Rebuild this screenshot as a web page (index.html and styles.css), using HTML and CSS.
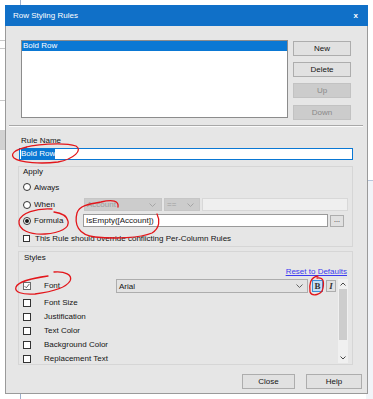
FILE: index.html
```html
<!DOCTYPE html>
<html>
<head>
<meta charset="utf-8">
<link rel="stylesheet" href="styles.css">
</head>
<body>
<div class="backdrop">
  <div class="bd-vline"></div>
  <div class="bd-hline l1"></div>
  <div class="bd-hline l2"></div>
  <div class="bd-hline l3"></div>
  <div class="bd-block"></div>
  <div class="bd-right"></div>
</div>

<div class="dialog">
  <div class="titlebar">
    <span class="title">Row Styling Rules</span>
    <span class="close">x</span>
  </div>
  <div class="body">
    <div class="top">
      <div class="listbox">
        <div class="item selected">Bold Row</div>
      </div>
      <div class="side-buttons">
        <div class="btn">New</div>
        <div class="btn">Delete</div>
        <div class="btn disabled">Up</div>
        <div class="btn disabled down">Down</div>
      </div>
    </div>
    <div class="separator"></div>
    <div class="label name-label">Rule Name</div>
    <div class="textbox name-box"><span class="sel">Bold Row</span></div>

    <div class="group apply">
      <div class="group-label">Apply</div>
      <div class="row always">
        <div class="opt"><span class="radio"></span><span>Always</span></div>
      </div>
      <div class="row when">
        <div class="opt"><span class="radio"></span><span>When</span></div>
        <div class="combo disabled c-account"><span>Account</span><svg class="chev" width="7" height="4" viewBox="0 0 7 4"><path d="M0.5 0.5 L3.5 3.5 L6.5 0.5" fill="none" stroke="#a0a0a0" stroke-width="0.9"/></svg></div>
        <div class="combo disabled c-op"><span>==</span><svg class="chev" width="7" height="4" viewBox="0 0 7 4"><path d="M0.5 0.5 L3.5 3.5 L6.5 0.5" fill="none" stroke="#a0a0a0" stroke-width="0.9"/></svg></div>
        <div class="textbox disabled c-value"></div>
      </div>
      <div class="row formula">
        <div class="opt"><span class="radio checked"></span><span>Formula</span></div>
        <div class="textbox f-box">IsEmpty([Account])</div>
        <div class="btn dots">...</div>
      </div>
      <div class="row override">
        <span class="check small"></span><span>This Rule should override conflicting Per-Column Rules</span>
      </div>
    </div>

    <div class="group styles">
      <div class="group-label">Styles</div>
      <div class="link-row"><span class="link">Reset to Defaults</span></div>
      <div class="style-list">
        <div class="items">
          <div class="srow font-row">
            <span class="check checked"><svg width="6" height="6" viewBox="0 0 6 6"><path d="M0.6 3.1 L2.3 4.8 L5.4 0.9" fill="none" stroke="#555" stroke-width="0.9"/></svg></span>
            <span class="slabel">Font</span>
            <div class="combo font-combo"><span>Arial</span><svg class="chev" width="7" height="4" viewBox="0 0 7 4"><path d="M0.5 0.5 L3.5 3.5 L6.5 0.5" fill="none" stroke="#555" stroke-width="0.9"/></svg></div>
            <div class="fbtn bold active">B</div>
            <div class="fbtn italic">I</div>
          </div>
          <div class="srow"><span class="check"></span><span class="slabel">Font Size</span></div>
          <div class="srow"><span class="check"></span><span class="slabel">Justification</span></div>
          <div class="srow"><span class="check"></span><span class="slabel">Text Color</span></div>
          <div class="srow"><span class="check"></span><span class="slabel">Background Color</span></div>
          <div class="srow"><span class="check"></span><span class="slabel">Replacement Text</span></div>
        </div>
        <div class="scrollbar">
          <div class="arrow"><svg width="6" height="4" viewBox="0 0 6 4"><path d="M0.5 3.5 L3 1 L5.5 3.5" fill="none" stroke="#333" stroke-width="0.9"/></svg></div>
          <div class="thumb"></div>
          <div class="track"></div>
          <div class="arrow"><svg width="6" height="4" viewBox="0 0 6 4"><path d="M0.5 0.5 L3 3 L5.5 0.5" fill="none" stroke="#333" stroke-width="0.9"/></svg></div>
        </div>
      </div>
    </div>

    <div class="footer">
      <div class="btn fbig close-btn">Close</div>
      <div class="btn fbig help-btn">Help</div>
    </div>
  </div>
</div>

<svg class="annotations" width="373" height="399" viewBox="0 0 373 399">
  <g fill="none" stroke="#e3161b" stroke-width="1.3" stroke-linecap="round" stroke-linejoin="round">
    <path d="M20 149 C32 144 64 142 76 146 C83 150 74 159 58 162 C42 164 20 163 14 158 C10 154 14 150 27 147"/>
    <path d="M52 209 C36 208 21 213 19 221 C18 230 30 235 45 234 C60 233 70 228 68 221 C67 216 61 213 54 212"/>
    <path d="M118 207 C119 201 113 199 101 202 C88 204 79 206 77 213 C74 224 78 235 95 237 C115 239 140 238 152 233 C160 228 160 220 157 214"/>
    <path d="M54 272 C65 271 73 275 70 281 C66 288 50 292 35 294 C22 295 14 292 16 287 C18 282 33 278 48 276"/>
    <path d="M318 276 C310 277 309 285 310 292 C312 297 322 295 323 288 C324 282 324 277 317 278"/>
  </g>
</svg>
</body>
</html>
```

FILE: styles.css
```css
html, body {
  margin: 0;
  padding: 0;
}
body {
  width: 373px;
  height: 399px;
  overflow: hidden;
  background: #ffffff;
  position: relative;
  font-family: "Liberation Sans", Arial, sans-serif;
  font-size: 8px;
  color: #141414;
}

/* background application behind the dialog */
.backdrop {
  position: absolute;
  left: 0;
  top: 0;
  width: 373px;
  height: 399px;
  z-index: 0;
}
.bd-vline {
  position: absolute;
  left: 20px;
  top: 0;
  width: 1px;
  height: 399px;
  background: #9fb0cc;
}
.bd-hline {
  position: absolute;
  left: 0;
  width: 6px;
  height: 1px;
  background: #c8c8c8;
}
.bd-hline.l1 { top: 40px; }
.bd-hline.l2 { top: 48px; }
.bd-hline.l3 { top: 100px; }
.bd-block {
  position: absolute;
  left: 0;
  top: 130px;
  width: 6px;
  height: 20px;
  background: #d2d2d2;
}
.bd-right {
  position: absolute;
  left: 366px;
  top: 180px;
  width: 7px;
  height: 219px;
  background: #f2f4f8;
  border-top: 1px solid #b7c6dc;
}

/* dialog */
.dialog {
  position: relative;
  z-index: 1;
  margin: 5px 0 0 5px;
  width: 363px;
}
.titlebar {
  height: 21px;
  background: #1070c8;
  color: #ffffff;
  display: flex;
  align-items: center;
  justify-content: space-between;
  padding: 0 10px 0 8px;
  box-sizing: border-box;
}
.close {
  font-weight: bold;
  font-size: 8px;
}
.body {
  height: 368px;
  box-sizing: border-box;
  border: 1px solid #9a9a9a;
  border-top: none;
  background: #e6e6e6;
  padding: 14px 14px 4px 12px;
}

.top {
  display: flex;
  gap: 5px;
  height: 78px;
  margin: 0 2px 0 3px;
}
.listbox {
  width: 267px;
  height: 78px;
  box-sizing: border-box;
  border: 1px solid #8c8c8c;
  background: #ffffff;
}
.item {
  height: 10px;
  line-height: 10px;
  padding-left: 1px;
}
.item.selected {
  background: #0a78d4;
  color: #ffffff;
}
.side-buttons {
  width: 58px;
  display: flex;
  flex-direction: column;
  gap: 6px;
  padding-top: 1px;
}
.side-buttons .down {
  margin-top: 1px;
}
.btn {
  height: 15px;
  box-sizing: border-box;
  border: 1px solid #adadad;
  background: #e1e1e1;
  text-align: center;
  line-height: 13px;
  color: #141414;
}
.btn.disabled {
  background: #cccccc;
  border-color: #c2c2c2;
  color: #8a8a8a;
}

.separator {
  margin: 7px -10px 0 -9px;
  height: 2px;
  box-sizing: border-box;
  border-top: 1px solid #a8a8a8;
  border-bottom: 1px solid #fbfbfb;
}
.label {
  height: 10px;
  line-height: 10px;
}
.name-label {
  margin: 9px 0 0 3px;
}
.textbox {
  box-sizing: border-box;
  border: 1px solid #9a9a9a;
  background: #ffffff;
  line-height: 10px;
}
.name-box {
  margin: 2px 0 0 1px;
  height: 12px;
  border-color: #0a78d4;
  padding-left: 1px;
}
.sel {
  display: inline-block;
  background: #0a78d4;
  color: #ffffff;
  height: 10px;
}

/* group boxes */
.group {
  box-sizing: border-box;
  border: 1px solid #d6d6d6;
}
.group-label {
  height: 10px;
  line-height: 10px;
}
.apply {
  margin-top: 6px;
  height: 81px;
  padding: 0 3px 0 4px;
}
.row {
  display: flex;
  align-items: center;
}
.always { height: 12px; margin-top: 4px; }
.when { height: 13px; margin-top: 5px; }
.formula { height: 13px; margin-top: 3px; }
.override { height: 10px; margin-top: 6px; }

.opt {
  width: 61px;
  display: flex;
  align-items: center;
  height: 100%;
}
.radio {
  width: 8px;
  height: 8px;
  box-sizing: border-box;
  border: 1px solid #333333;
  border-radius: 50%;
  background: #ffffff;
  margin-right: 3px;
  display: flex;
  align-items: center;
  justify-content: center;
}
.radio.checked::after {
  content: "";
  width: 4px;
  height: 4px;
  border-radius: 50%;
  background: #1a1a1a;
}
.combo {
  height: 13px;
  box-sizing: border-box;
  display: flex;
  align-items: center;
  justify-content: space-between;
  padding: 0 5px 0 2px;
  border: 1px solid #b4b4b4;
}
.combo.disabled {
  background: #cccccc;
  border-color: #c6c6c6;
  color: #9c9c9c;
}
.c-account { width: 78px; }
.c-op { width: 36px; margin-left: 2px; }
.c-value {
  width: 146px;
  height: 13px;
  margin-left: 2px;
}
.textbox.disabled {
  background: #efefef;
  border-color: #d8d8d8;
}
.f-box {
  width: 245px;
  height: 13px;
  margin-left: -1px;
  padding-left: 2px;
  line-height: 11px;
}
.dots {
  width: 14px;
  height: 12px;
  margin: 1px 0 0 2px;
  line-height: 8px;
  align-self: flex-start;
  font-size: 7px;
}
.check {
  width: 8px;
  height: 8px;
  box-sizing: border-box;
  border: 1px solid #333333;
  background: #ffffff;
  display: flex;
  align-items: center;
  justify-content: center;
}
.check.small {
  width: 7px;
  height: 7px;
  margin-right: 5px;
}
.check.checked {
  border-color: #6a6a6a;
}

.styles {
  margin-top: 4px;
  height: 114px;
  padding: 0 4px;
}
.styles .group-label {
  margin-top: 1px;
  margin-left: 1px;
}
.link-row {
  margin-top: 4px;
  height: 10px;
  line-height: 10px;
  text-align: right;
  padding-right: 1px;
}
.link {
  color: #3b3bf0;
  text-decoration: underline;
}
.style-list {
  margin-top: 2px;
  height: 84px;
  display: flex;
}
.items {
  flex: 1;
  overflow: hidden;
}
.srow {
  height: 14px;
  display: flex;
  align-items: center;
}
.srow .check {
  margin-right: 13px;
}
.slabel {
  width: 72px;
  line-height: 14px;
  white-space: nowrap;
}
.font-row {
  height: 17px;
  align-items: flex-start;
}
.font-row .check {
  margin-top: 3px;
}
.font-combo {
  width: 192px;
  height: 14px;
  background: #e3e3e3;
  border-color: #adadad;
  padding: 0 4px 0 2px;
}
.fbtn {
  height: 12px;
  margin-top: 1px;
  box-sizing: border-box;
  border: 1px solid #adadad;
  background: #e1e1e1;
  font-family: "Liberation Serif", "Times New Roman", serif;
  font-weight: bold;
  font-size: 9px;
  line-height: 10px;
  text-align: center;
  color: #333333;
}
.fbtn.bold {
  width: 11px;
  margin-left: 4px;
}
.fbtn.active {
  background: #c5dff5;
  border-color: #3f8fd6;
}
.fbtn.italic {
  width: 10px;
  margin-left: 3px;
  font-style: italic;
}
.scrollbar {
  width: 10px;
  height: 84px;
  background: #f0f0f0;
  display: flex;
  flex-direction: column;
}
.arrow {
  height: 10px;
  display: flex;
  align-items: center;
  justify-content: center;
}
.thumb {
  height: 51px;
  margin: 0 1px;
  background: #cdcdcd;
}
.track {
  flex: 1;
}

.footer {
  margin: 9px -9px 0 0;
  display: flex;
  justify-content: flex-end;
  gap: 11px;
}
.fbig {
  height: 15px;
}
.close-btn { width: 53px; }
.help-btn { width: 56px; }

.annotations {
  position: absolute;
  left: 0;
  top: 0;
  z-index: 2;
  pointer-events: none;
}
```
